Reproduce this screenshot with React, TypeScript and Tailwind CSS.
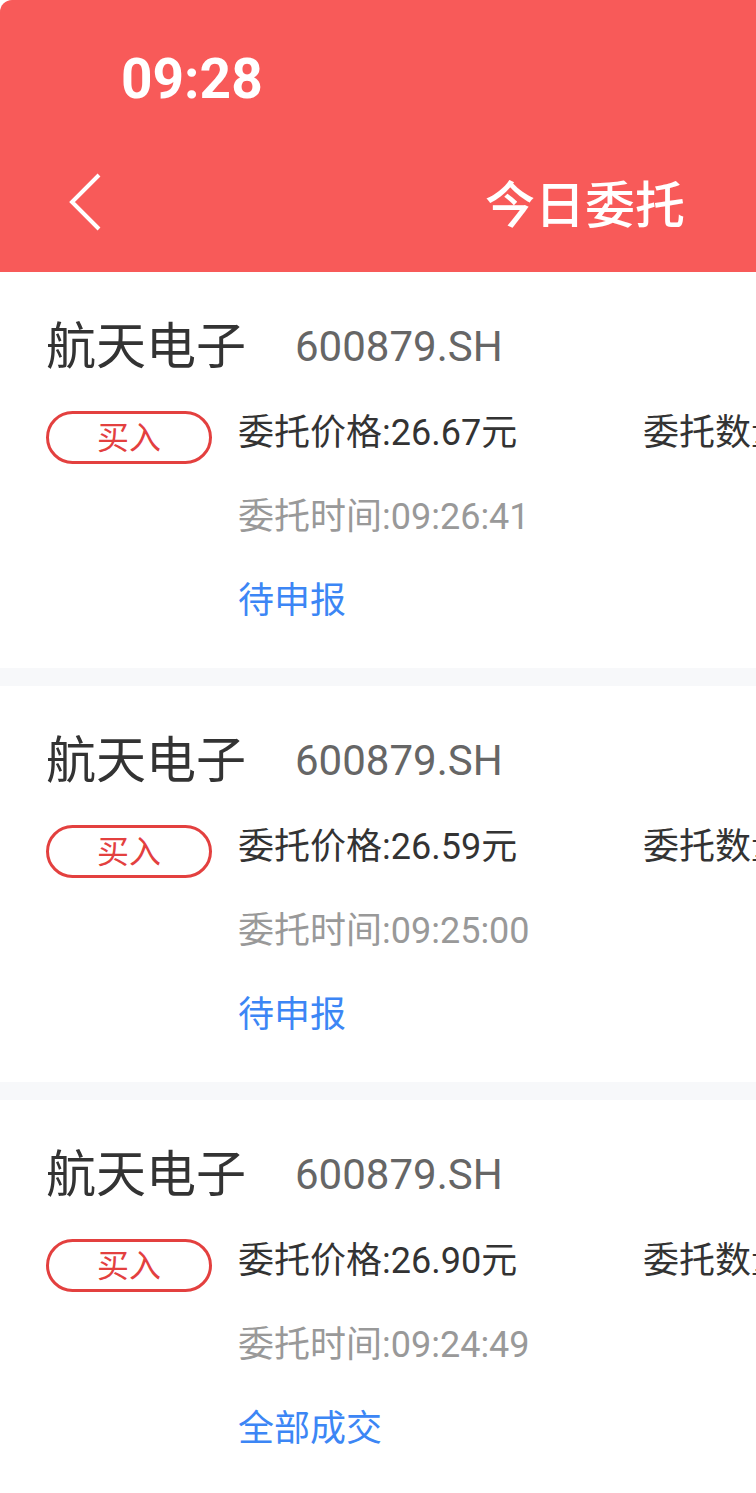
const orders = [
  { price: "26.67", time: "09:26:41", status: "待申报" },
  { price: "26.59", time: "09:25:00", status: "待申报" },
  { price: "26.90", time: "09:24:49", status: "全部成交" },
];

const font = { fontFamily: "Roboto, 'Noto Sans CJK SC', sans-serif" };

const OrderCard = ({ price, time, status }: { price: string; time: string; status: string }) => {
  return (
    <div className="bg-white pl-[46px] pt-[50px] pb-[49px]">
      <div className="flex items-center whitespace-nowrap">
        <span className="text-[50px] leading-[50px] text-[#333333]">航天电子</span>
        <span className="ml-[49px] text-[42px] leading-[50px] text-[#666666]">600879.SH</span>
      </div>
      <div className="mt-[39px] flex items-start">
        <div className="flex h-[53px] w-[166px] shrink-0 items-center justify-center rounded-full border-[3px] border-[#e3403f] text-[32px] leading-[32px] text-[#e3403f]">
          买入
        </div>
        <div className="ml-[26px] flex flex-col pt-[4px] text-[36px] leading-[36px] whitespace-nowrap">
          <div className="flex text-[#333333]">
            <span className="w-[405px]">委托价格:{price}元</span>
            <span>委托数量:100股</span>
          </div>
          <div className="mt-[48px] text-[#999999]">委托时间:{time}</div>
          <div className="mt-[48px] text-[#3c86f5]">{status}</div>
        </div>
      </div>
    </div>
  );
};

export default function App() {
  return (
    <div className="w-full min-h-[1493px] overflow-hidden bg-white" style={font}>
      <div className="w-[1170px]">
        <div className="h-[272px] rounded-tl-[12px] bg-[#f85a59]">
          <div className="pl-[121px] pt-[52px] text-[55px] font-bold leading-[55px] text-white">09:28</div>
          <div className="mt-[65px] grid grid-cols-[1fr_auto_1fr] items-start">
            <div className="pl-[66px]">
              <svg width="40" height="60" viewBox="0 0 40 60" fill="none">
                <path d="M33 3 L6 30 L33 57" stroke="white" strokeWidth="4" />
              </svg>
            </div>
            <div className="mt-[9px] text-[50px] font-medium leading-[50px] text-white">今日委托</div>
            <div />
          </div>
        </div>
        <div className="flex flex-col gap-[18px] bg-[#f7f8fa]">
          {orders.map((o, i) => (
            <OrderCard key={i} {...o} />
          ))}
        </div>
      </div>
    </div>
  );
}
